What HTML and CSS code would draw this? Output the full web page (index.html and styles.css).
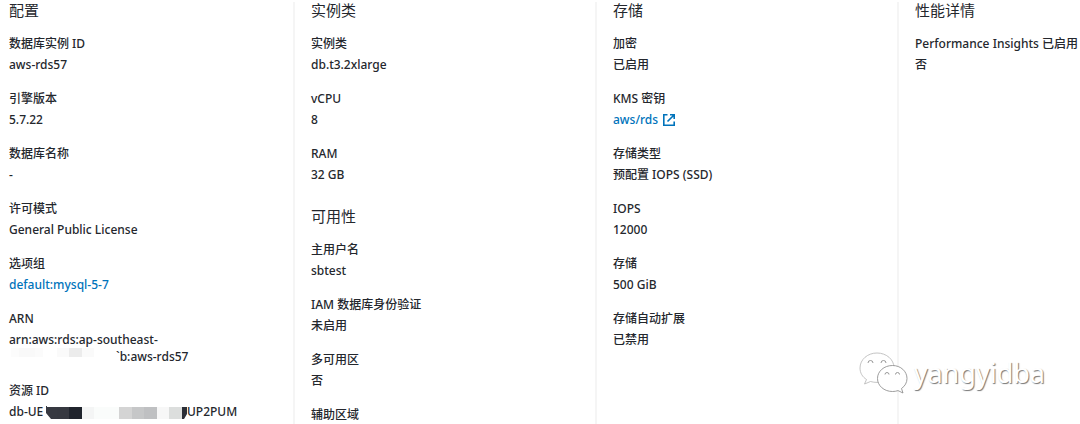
FILE: index.html
```html
<!DOCTYPE html>
<html lang="zh-CN">

<head>
    <meta charset="UTF-8" />
    <meta name="viewport" content="width=device-width, initial-scale=1.0" />
    <title>数据库实例配置</title>
    <link rel="stylesheet" href="styles.css">
</head>

<body>
    <main class="details">
        <!-- 配置 -->
        <section class="column">
            <h2>配置</h2>
            <dl>
                <div class="field">
                    <dt>数据库实例 ID</dt>
                    <dd>aws-rds57</dd>
                </div>
                <div class="field">
                    <dt>引擎版本</dt>
                    <dd>5.7.22</dd>
                </div>
                <div class="field">
                    <dt>数据库名称</dt>
                    <dd>-</dd>
                </div>
                <div class="field">
                    <dt>许可模式</dt>
                    <dd>General Public License</dd>
                </div>
                <div class="field">
                    <dt>选项组</dt>
                    <dd><a href="#">default:mysql-5-7</a></dd>
                </div>
                <div class="field">
                    <dt>ARN</dt>
                    <dd>arn:aws:rds:ap-southeast-</dd>
                    <dd class="masked">
                        <svg width="107" height="17" viewBox="0 0 107 17" aria-hidden="true">
                            <rect x="2" y="0" width="8" height="9" fill="#fcfcfc" />
                            <rect x="10" y="0" width="16" height="9" fill="#f9f9f9" />
                            <rect x="26" y="0" width="8" height="9" fill="#fbfbfb" />
                            <rect x="48" y="0" width="12" height="9" fill="#fafafa" />
                            <rect x="60" y="0" width="13" height="9" fill="#ececec" />
                            <rect x="73" y="0" width="12" height="9" fill="#fafafa" />
                        </svg>
                        <span>`b:aws-rds57</span>
                    </dd>
                </div>
                <div class="field">
                    <dt>资源 ID</dt>
                    <dd class="masked">
                        <span class="mask-start">db-UE</span>
                        <svg width="141" height="17" viewBox="0 0 141 17" aria-hidden="true">
                            <path d="M0 3h1v1h10v12H5L0 10z" fill="#373941" />
                            <rect x="11" y="4" width="12" height="12" fill="#363840" />
                            <rect x="23" y="4" width="13" height="12" fill="#20242d" />
                            <rect x="36" y="4" width="12" height="12" fill="#f4f5f5" />
                            <rect x="48" y="4" width="25" height="12" fill="#fafcfb" />
                            <rect x="73" y="4" width="13" height="12" fill="#d4d4d4" />
                            <rect x="86" y="4" width="12" height="12" fill="#c6c7c8" />
                            <rect x="98" y="4" width="13" height="12" fill="#bfc0c2" />
                            <rect x="111" y="4" width="12" height="12" fill="#f7f7f7" />
                            <rect x="123" y="4" width="13" height="12" fill="#dcdedd" />
                            <path d="M136 4h5v7l-3 5h-2z" fill="#2b2e37" />
                        </svg>
                        <span>UP2PUM</span>
                    </dd>
                </div>
            </dl>
        </section>

        <!-- 实例类 / 可用性 -->
        <section class="column">
            <h2>实例类</h2>
            <dl>
                <div class="field">
                    <dt>实例类</dt>
                    <dd>db.t3.2xlarge</dd>
                </div>
                <div class="field">
                    <dt>vCPU</dt>
                    <dd>8</dd>
                </div>
                <div class="field">
                    <dt>RAM</dt>
                    <dd>32 GB</dd>
                </div>
            </dl>
            <h2>可用性</h2>
            <dl>
                <div class="field">
                    <dt>主用户名</dt>
                    <dd>sbtest</dd>
                </div>
                <div class="field">
                    <dt>IAM 数据库身份验证</dt>
                    <dd>未启用</dd>
                </div>
                <div class="field">
                    <dt>多可用区</dt>
                    <dd>否</dd>
                </div>
                <div class="field">
                    <dt>辅助区域</dt>
                </div>
            </dl>
        </section>

        <!-- 存储 -->
        <section class="column">
            <h2>存储</h2>
            <dl>
                <div class="field">
                    <dt>加密</dt>
                    <dd>已启用</dd>
                </div>
                <div class="field">
                    <dt>KMS 密钥</dt>
                    <dd>
                        <a class="external" href="#">aws/rds
                            <svg width="14" height="14" viewBox="0 0 14 14" fill="none" stroke="currentColor" stroke-width="1.6" aria-hidden="true">
                                <path d="M5.5 1.8H1.8v10.4h10.4V8.5" />
                                <path d="M8 1.8h4.2V6M12 2L5.5 8.5" />
                            </svg>
                        </a>
                    </dd>
                </div>
                <div class="field">
                    <dt>存储类型</dt>
                    <dd>预配置 IOPS (SSD)</dd>
                </div>
                <div class="field">
                    <dt>IOPS</dt>
                    <dd>12000</dd>
                </div>
                <div class="field">
                    <dt>存储</dt>
                    <dd>500 GiB</dd>
                </div>
                <div class="field">
                    <dt>存储自动扩展</dt>
                    <dd>已禁用</dd>
                </div>
            </dl>
        </section>

        <!-- 性能详情 -->
        <section class="column">
            <h2>性能详情</h2>
            <dl>
                <div class="field">
                    <dt>Performance Insights 已启用</dt>
                    <dd>否</dd>
                </div>
            </dl>
        </section>
    </main>

    <!-- 水印 -->
    <div class="watermark">
        <svg width="50" height="42" viewBox="0 0 50 42" fill="#fff" aria-hidden="true">
            <path class="bubble" d="M18 1C8.600 1 1 7.500 1 16c0 5 2.500 9 6.500 11.500L5.500 32l6-2.500c2 .6 4.300.9 6.500.9 9.400 0 17-6.500 17-14.700S27.400 1 18 1z" />
            <path class="eye" d="M9 11a2.500 2.500 0 0 1 5 0M22 11a2.500 2.500 0 0 1 5 0" />
            <path class="bubble front" d="M33.500 13.500C25 13.500 18.500 19.300 18.500 26.500S25 39.500 33.500 39.500c2 0 3.800-.3 5.500-.9l5 2.400-1.500-4.500c3.500-2.300 5.500-6 5.500-10 0-7.200-6.300-13-14.500-13z" />
            <path class="eye" d="M26 22.500a2 2 0 0 1 4 0M36.500 22.500a2 2 0 0 1 4 0" />
        </svg>
        <span>yangyidba</span>
    </div>
</body>

</html>
```
FILE: styles.css
```css
* {
    box-sizing: border-box;
}

body {
    margin: 0;
    background: #fff;
    color: #24272d;
    font-family: "Noto Sans", "Noto Sans CJK SC", sans-serif;
    font-size: 12px;
    font-weight: 500;
    line-height: 17px;
    overflow: hidden;
}

h2,
dl,
dd {
    margin: 0;
}

a {
    color: #0073bb;
    text-decoration: none;
}

.details {
    display: grid;
    grid-template-columns: 293fr 302fr 302fr 183fr;
    min-height: 100vh;
    padding-top: 2px;
}

.column {
    min-width: 0;
    padding-left: 16px;
    border-left: 2px solid #f5f5f5;
    white-space: nowrap;
}

.column:first-child {
    padding-left: 9px;
    border-left: 0;
}

h2 {
    margin-bottom: 16px;
    font-size: 15px;
    font-weight: 400;
    line-height: 17px;
}

dl + h2 {
    margin-top: 25px;
}

dl {
    display: flex;
    flex-direction: column;
    gap: 17px;
}

dt {
    margin-bottom: 4px;
}

/* CJK 和拉丁混排时固定行高 */
dt,
dd {
    height: 17px;
}

/* 打码的值 */
.masked {
    display: flex;
}

.mask-start {
    width: 37px;
}

.external {
    display: inline-flex;
    align-items: center;
    gap: 4px;
}

/* 水印 */
.watermark {
    position: absolute;
    right: 35px;
    bottom: 30px;
    display: flex;
    align-items: center;
    gap: 5px;
    color: #fff;
    font-size: 27px;
    font-weight: 400;
    line-height: 42px;
    text-shadow: 1px 1px 1px #777;
}

.bubble {
    stroke: #b5b5b5;
    stroke-width: 0.8;
}

.front {
    stroke: #858585;
}

.eye {
    fill: none;
    stroke: #999;
    stroke-width: 1;
}
```
